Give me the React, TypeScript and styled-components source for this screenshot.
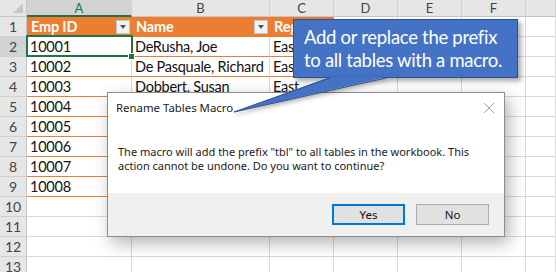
import React from "react";
import styled, { createGlobalStyle } from "styled-components";

const GlobalStyle = createGlobalStyle`
  html, body { margin: 0; padding: 0; background: #fff; }
  body { width: 556px; height: 272px; overflow: hidden; }
`;

const ORANGE = "#ED7D31";
const GRID = "#d9d9d9";
const GREEN = "#217346";

const columns = ["A", "B", "C", "D", "E", "F", ""];
const headers = ["Emp ID", "Name", "Region"];
const rows = [
  ["10001", "DeRusha, Joe", "East"],
  ["10002", "De Pasquale, Richard", "East"],
  ["10003", "Dobbert, Susan", "East"],
  ["10004", "Hansen, Mark", "West"],
  ["10005", "Kowalski, Anna", "West"],
  ["10006", "Lopez, Maria", "North"],
  ["10007", "Nguyen, Tam", "South"],
  ["10008", "Olsen, Peter", "South"],
];

const Page = styled.div`
  position: relative;
  width: 556px;
  height: 272px;
  overflow: hidden;
  font-family: Lato, "Liberation Sans", sans-serif;
`;

const Sheet = styled.div`
  display: grid;
  grid-template-columns: 27px 105px 138px 64px 64px 64px 64px 1fr;
  grid-template-rows: 17px;
  grid-auto-rows: 20px;
`;

const Corner = styled.div`
  position: relative;
  background: #e6e6e6;
  border-right: 1px solid #c6c6c6;
  border-bottom: 1px solid #c6c6c6;
  &::after {
    content: "";
    position: absolute;
    right: 3px;
    bottom: 3px;
    border-left: 10px solid transparent;
    border-bottom: 10px solid #c8c8c8;
  }
`;

const ColHead = styled.div<{ $active?: boolean }>`
  display: flex;
  align-items: center;
  justify-content: center;
  background: ${(p) => (p.$active ? "#d3d3d3" : "#e6e6e6")};
  color: ${(p) => (p.$active ? GREEN : "#444")};
  font-size: 13px;
  border-right: 1px solid #d0d0d0;
  border-bottom: ${(p) => (p.$active ? `2px solid ${GREEN}` : "1px solid #c6c6c6")};
  box-sizing: border-box;
`;

const RowHead = styled.div<{ $active?: boolean }>`
  display: flex;
  align-items: center;
  justify-content: center;
  background: ${(p) => (p.$active ? "#d3d3d3" : "#e6e6e6")};
  color: #444;
  font-size: 14px;
  border-right: 1px solid #c6c6c6;
  border-bottom: 1px solid #d0d0d0;
  box-sizing: border-box;
`;

const Cell = styled.div<{ $table?: boolean; $selected?: boolean }>`
  position: relative;
  display: flex;
  align-items: center;
  padding: 0 3px;
  font-size: 14.5px;
  letter-spacing: -0.25px;
  color: #111;
  white-space: nowrap;
  overflow: ${(p) => (p.$selected ? "visible" : "hidden")};
  border-right: 1px solid ${GRID};
  border-bottom: 1px solid ${(p) => (p.$table ? ORANGE : GRID)};
  box-sizing: border-box;
  ${(p) =>
    p.$selected &&
    `
    &::after {
      content: "";
      position: absolute;
      left: -1px; top: -2px; right: -2px; bottom: -1px;
      border: 2px solid ${GREEN};
      z-index: 1;
    }
    &::before {
      content: "";
      position: absolute;
      right: -4px; bottom: -4px;
      width: 5px; height: 5px;
      background: ${GREEN};
      border: 1px solid #fff;
      z-index: 2;
    }
  `}
`;

const HeadCell = styled.div`
  display: flex;
  align-items: center;
  justify-content: space-between;
  padding: 0 2px 0 4px;
  background: ${ORANGE};
  color: #fff;
  font-weight: 700;
  font-size: 14.5px;
  letter-spacing: -0.2px;
  white-space: nowrap;
  overflow: hidden;
  border-bottom: 1px solid ${ORANGE};
  box-sizing: border-box;
`;

const FilterButton = styled.span`
  display: flex;
  align-items: center;
  justify-content: center;
  flex: none;
  width: 14px;
  height: 14px;
  background: #f2f2f2;
  border: 1px solid #c8c8c8;
  box-sizing: border-box;
  &::after {
    content: "";
    border-left: 3.5px solid transparent;
    border-right: 3.5px solid transparent;
    border-top: 4px solid #555;
  }
`;

const Callout = styled.div`
  position: absolute;
  left: 293px;
  top: 19px;
  width: 225px;
  height: 59px;
  box-sizing: border-box;
  padding: 6px 0 0 10px;
  background: #4472c4;
  border: 1px solid #2f528f;
  color: #fff;
  font-family: Lato, "Liberation Sans", sans-serif;
  font-size: 18.5px;
  letter-spacing: -0.3px;
  line-height: 23px;
  white-space: nowrap;
  box-shadow: 3px 3px 5px rgba(0, 0, 0, 0.35);
  z-index: 5;
`;

const Tail = styled.svg`
  position: absolute;
  left: 0;
  top: 0;
  z-index: 6;
  filter: drop-shadow(2px 2px 2px rgba(0, 0, 0, 0.3));
`;

const Dialog = styled.div`
  position: absolute;
  left: 107px;
  top: 92px;
  width: 398px;
  height: 145px;
  display: flex;
  flex-direction: column;
  background: #fff;
  border: 1px solid #8c8c8c;
  box-sizing: border-box;
  box-shadow: 4px 6px 16px rgba(0, 0, 0, 0.3);
  font-family: "Noto Sans", "Open Sans", sans-serif;
  color: #1a1a1a;
  z-index: 4;
`;

const TitleBar = styled.div`
  display: flex;
  align-items: center;
  justify-content: space-between;
  height: 29px;
  padding: 0 9px 0 8px;
  font-size: 11.4px;
`;

const Body = styled.div`
  flex: 1;
  padding: 23px 10px 0 10px;
  font-size: 11px;
  line-height: 13.5px;
  white-space: nowrap;
`;

const Footer = styled.div`
  display: flex;
  justify-content: flex-end;
  gap: 11px;
  height: 43px;
  padding: 11px 15px 0 0;
  box-sizing: border-box;
  background: #f0f0f0;
`;

const DialogButton = styled.button<{ $default?: boolean }>`
  width: 73px;
  height: 21px;
  padding: 0;
  font-family: inherit;
  font-size: 11.5px;
  color: #111;
  background: #e1e1e1;
  border: ${(p) => (p.$default ? "2px solid #0078d7" : "1px solid #adadad")};
  box-sizing: border-box;
`;

const CloseIcon = () => (
  <svg width="12" height="12" viewBox="0 0 12 12">
    <path d="M1 1 L11 11 M11 1 L1 11" stroke="#a0a0a0" strokeWidth="1" />
  </svg>
);

export default function App() {
  return (
    <Page>
      <GlobalStyle />
      <Sheet>
        <Corner />
        {columns.map((c, i) => (
          <ColHead key={i} $active={c === "A"}>
            {c}
          </ColHead>
        ))}

        <RowHead>1</RowHead>
        {headers.map((h) => (
          <HeadCell key={h}>
            <span>{h}</span>
            <FilterButton />
          </HeadCell>
        ))}
        {columns.slice(3).map((c, i) => (
          <Cell key={i} />
        ))}

        {rows.map((r, ri) => (
          <React.Fragment key={ri}>
            <RowHead $active={ri === 0}>{ri + 2}</RowHead>
            {r.map((v, ci) => (
              <Cell key={ci} $table $selected={ri === 0 && ci === 0}>
                {v}
              </Cell>
            ))}
            {columns.slice(3).map((c, i) => (
              <Cell key={i} />
            ))}
          </React.Fragment>
        ))}

        {[10, 11, 12, 13].map((n) => (
          <React.Fragment key={n}>
            <RowHead>{n}</RowHead>
            {columns.map((c, i) => (
              <Cell key={i} />
            ))}
          </React.Fragment>
        ))}
      </Sheet>

      <Dialog>
        <TitleBar>
          <span>Rename Tables Macro</span>
          <CloseIcon />
        </TitleBar>
        <Body>
          The macro will add the prefix "tbl" to all tables in the workbook. This
          <br />
          action cannot be undone. Do you want to continue?
        </Body>
        <Footer>
          <DialogButton $default>Yes</DialogButton>
          <DialogButton>No</DialogButton>
        </Footer>
      </Dialog>

      <Callout>
        Add or replace the prefix
        <br />
        to all tables with a macro.
      </Callout>
      <Tail width="556" height="272" viewBox="0 0 556 272">
        <polygon points="330,77 386,77 234,112" fill="#4472c4" />
        <polyline points="330,78 234,112 386,78" fill="none" stroke="#2f528f" strokeWidth="1" />
      </Tail>
    </Page>
  );
}
